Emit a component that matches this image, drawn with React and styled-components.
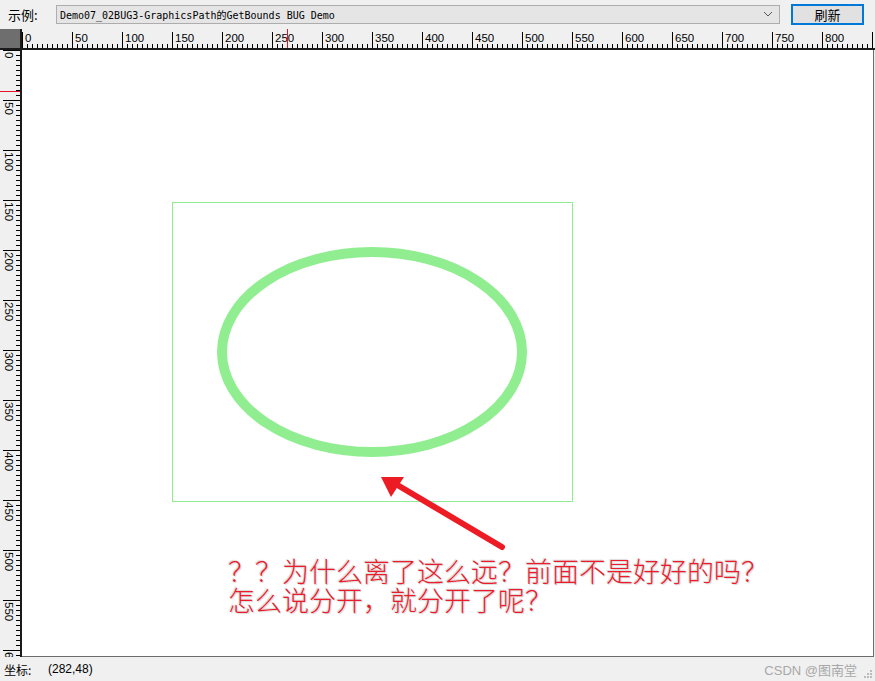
import styled, { createGlobalStyle } from "styled-components";

const GlobalStyle = createGlobalStyle`
  html, body {
    margin: 0;
    padding: 0;
    background: #f0f0f0;
  }
  body {
    font-family: "Noto Sans CJK SC", "Liberation Sans", sans-serif;
  }
`;

const Window = styled.div`
  width: 875px;
  height: 681px;
  display: flex;
  flex-direction: column;
  background: #f0f0f0;
  overflow: hidden;
`;

const Toolbar = styled.div`
  height: 29px;
  display: flex;
  align-items: center;
  padding: 0 11px 0 8px;
  box-sizing: border-box;
`;

const Label = styled.span`
  font-size: 13px;
  color: #000;
  width: 48px;
`;

const Combo = styled.div`
  width: 725px;
  height: 19px;
  box-sizing: border-box;
  border: 1px solid #adadad;
  background: #e5e5e5;
  display: flex;
  align-items: center;
  padding: 0 6px 0 3px;
  margin-top: -1px;
  font-family: "DejaVu Sans Mono", "Liberation Mono", "Noto Sans CJK SC", monospace;
  font-size: 10px;
  color: #000;
`;

const ComboText = styled.span`
  flex: 1;
  white-space: nowrap;
`;

const RefreshButton = styled.button`
  margin-left: 11px;
  width: 73px;
  height: 21px;
  box-sizing: border-box;
  border: 2px solid #0078d7;
  background: #e1e1e1;
  font-family: "Noto Sans CJK SC", sans-serif;
  font-size: 13px;
  padding: 0;
  line-height: 17px;
  color: #000;
`;

const RulerRow = styled.div`
  display: flex;
  height: 21px;
`;

const Corner = styled.div`
  width: 22px;
  height: 21px;
  box-sizing: border-box;
  background: #6e6e6e;
  border-right: 2px solid #1a1a1a;
  border-bottom: 2px solid #1a1a1a;
`;

const MainRow = styled.div`
  display: flex;
  height: 607px;
`;

const Canvas = styled.div`
  position: relative;
  width: 852px;
  height: 607px;
  box-sizing: border-box;
  background: #fff;
  border-right: 1px solid #6b6b6b;
  border-bottom: 1px solid #6b6b6b;
`;

const Note = styled.div`
  position: absolute;
  left: 206px;
  top: 506px;
  font-family: "Noto Sans CJK SC", serif;
  font-size: 27px;
  line-height: 29px;
  color: #ec1c2c;
  text-shadow: 1px 1px 1px #d8d8d8, -1px -1px 1px #d8d8d8;
  white-space: pre;
  font-weight: 300;
`;

const StatusBar = styled.div`
  flex: 1;
  display: flex;
  align-items: center;
  padding: 0 4px;
  font-size: 12px;
  color: #000;
  position: relative;
`;

const StatusLabel = styled.span`
  width: 44px;
`;

const StatusValue = styled.span`
  font-family: "Liberation Sans", sans-serif;
  font-size: 12px;
`;

const Watermark = styled.span`
  margin-left: auto;
  margin-right: 14px;
  font-family: "Liberation Sans", "Noto Sans CJK SC", sans-serif;
  font-size: 13px;
  color: #a8a8a8;
`;

const Grip = styled.svg`
  position: absolute;
  right: 2px;
  bottom: 2px;
`;

function HorizontalRuler() {
  const ticks = [];
  for (let v = 0; v <= 850; v += 5) {
    const x = v + 0.5;
    const major = v % 50 === 0;
    ticks.push(
      <line key={v} x1={x} x2={x} y1={major ? 3 : 15} y2={19} stroke="#000" strokeWidth="1" />
    );
    if (major && v < 850)
      ticks.push(
        <text key={"t" + v} x={v + 3} y={13} fontSize="11.5" fontFamily="Liberation Sans, sans-serif" fill="#000">
          {v}
        </text>
      );
  }
  return (
    <svg width="853" height="21" style={{ display: "block" }}>
      <rect x="0" y="0" width="853" height="21" fill="#f0f0f0" />
      {ticks}
      <rect x="0" y="19" width="853" height="2" fill="#1a1a1a" />
      <line x1="265.5" x2="265.5" y1="0" y2="19" stroke="#e81123" />
    </svg>
  );
}

function VerticalRuler() {
  const ticks = [];
  for (let v = 0; v <= 610; v += 5) {
    const y = v + 0.5;
    const major = v % 50 === 0;
    ticks.push(
      <line key={v} y1={y} y2={y} x1={major ? 3 : 16} x2={20} stroke="#000" strokeWidth="1" />
    );
    if (major)
      ticks.push(
        <text
          key={"t" + v}
          x={0}
          y={0}
          fontSize="11.5"
          fontFamily="Liberation Sans, sans-serif"
          fill="#000"
          transform={`translate(5 ${v + 2}) rotate(90)`}
        >
          {v}
        </text>
      );
  }
  return (
    <svg width="22" height="607" style={{ display: "block", flex: "none" }}>
      <rect x="0" y="0" width="22" height="607" fill="#f0f0f0" />
      {ticks}
      <rect x="20" y="0" width="2" height="607" fill="#1a1a1a" />
      <line x1="0" x2="20" y1="41.5" y2="41.5" stroke="#e81123" />
    </svg>
  );
}

function Drawing() {
  return (
    <svg width="851" height="606" style={{ position: "absolute", left: 0, top: 0 }}>
      <rect x="150.5" y="152.5" width="400" height="299" fill="none" stroke="#90ee90" strokeWidth="1" />
      <ellipse cx="350" cy="302" rx="150" ry="100" fill="none" stroke="#90ee90" strokeWidth="10" />
      <line x1="480" y1="497" x2="372" y2="433" stroke="#ed1c24" strokeWidth="6" strokeLinecap="round" />
      <polygon points="359,427 382,427 369,447" fill="#ed1c24" />
    </svg>
  );
}

export default function App() {
  return (
    <>
      <GlobalStyle />
      <Window>
        <Toolbar>
          <Label>示例:</Label>
          <Combo>
            <ComboText>Demo07_02BUG3-GraphicsPath的GetBounds BUG Demo</ComboText>
            <svg width="10" height="6" viewBox="0 0 10 6">
              <path d="M1 1 L5 5 L9 1" fill="none" stroke="#555" strokeWidth="1" />
            </svg>
          </Combo>
          <RefreshButton>刷新</RefreshButton>
        </Toolbar>
        <RulerRow>
          <Corner />
          <HorizontalRuler />
        </RulerRow>
        <MainRow>
          <VerticalRuler />
          <Canvas>
            <Drawing />
            <Note>{"？？为什么离了这么远？前面不是好好的吗？\n怎么说分开，就分开了呢？"}</Note>
          </Canvas>
        </MainRow>
        <StatusBar>
          <StatusLabel>坐标:</StatusLabel>
          <StatusValue>(282,48)</StatusValue>
          <Watermark>CSDN @图南堂</Watermark>
          <Grip width="10" height="10" viewBox="0 0 10 10">
            <rect x="7" y="1" width="2" height="2" fill="#bcbcbc" />
            <rect x="4" y="4" width="2" height="2" fill="#bcbcbc" />
            <rect x="7" y="4" width="2" height="2" fill="#bcbcbc" />
            <rect x="1" y="7" width="2" height="2" fill="#bcbcbc" />
            <rect x="4" y="7" width="2" height="2" fill="#bcbcbc" />
            <rect x="7" y="7" width="2" height="2" fill="#bcbcbc" />
          </Grip>
        </StatusBar>
      </Window>
    </>
  );
}
